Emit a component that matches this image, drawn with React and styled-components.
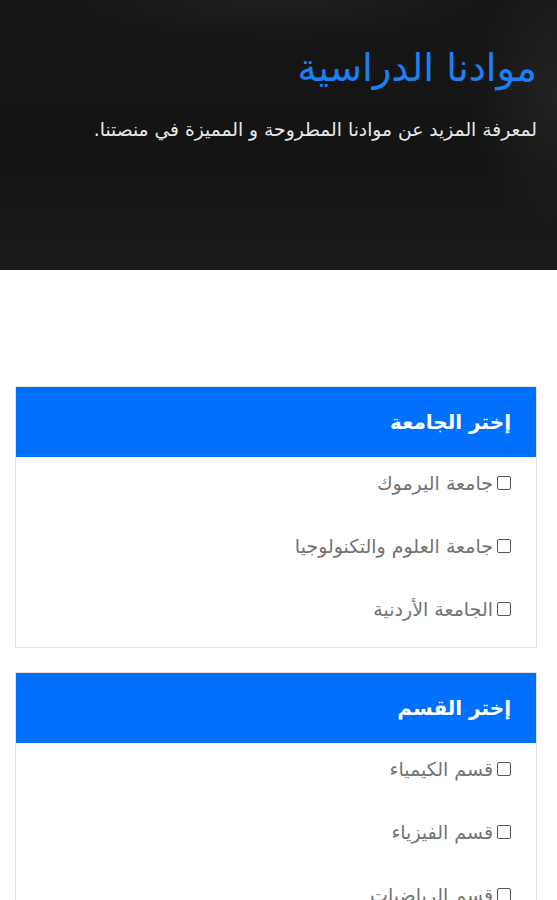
import React from "react";
import styled, { createGlobalStyle } from "styled-components";

const Global = createGlobalStyle`
  html, body { margin: 0; padding: 0; background: #fff; }
  body { font-family: "DejaVu Sans", "Noto Sans Arabic", sans-serif; }
  * { box-sizing: border-box; }
`;

const Page = styled.div`
  direction: rtl;
  width: 557px;
`;

const Hero = styled.header`
  height: 270px;
  background:
    radial-gradient(ellipse 120px 200px at 100% 35%, rgba(60,60,60,0.35), transparent 70%),
    radial-gradient(ellipse 300px 60px at 50% 0%, rgba(50,50,50,0.35), transparent 70%),
    linear-gradient(180deg, #161616 0%, #141414 60%, #1b1b1b 100%);
  padding: 44px 20px 0 20px;
  display: flex;
  flex-direction: column;
  gap: 25px;
`;

const Title = styled.h1`
  margin: 0;
  color: #1d80f2;
  font-size: 38.5px;
  font-weight: 400;
  line-height: 48px;
`;

const Subtitle = styled.p`
  margin: 0;
  color: #e8e8e8;
  font-size: 18.7px;
  line-height: 26px;
`;

const Content = styled.main`
  padding: 116px 20px 0 15px;
  display: flex;
  flex-direction: column;
  gap: 24px;
`;

const Card = styled.section`
  border: 1px solid #e3e3e3;
  background: #fff;
`;

const CardHeader = styled.h2`
  margin: 0;
  height: 70px;
  background: #0070fe;
  color: #fff;
  font-size: 20px;
  font-weight: 700;
  padding: 0 25px;
  display: flex;
  align-items: center;
`;

const List = styled.div`
  display: flex;
  flex-direction: column;
  padding: 12px 25px 24px;
  gap: 35px;
`;

const Option = styled.label`
  display: flex;
  align-items: center;
  gap: 4px;
  height: 28px;
  color: #737373;
  font-size: 19px;
`;

const Box = styled.input`
  appearance: none;
  margin: 0;
  width: 14px;
  height: 14px;
  border: 1.5px solid #555;
  border-radius: 2px;
  background: #fff;
  flex: none;
`;

const groups = [
  { title: "إختر الجامعة", items: ["جامعة اليرموك", "جامعة العلوم والتكنولوجيا", "الجامعة الأردنية"] },
  { title: "إختر القسم", items: ["قسم الكيمياء", "قسم الفيزياء", "قسم الرياضيات"] },
];

export default function App() {
  return (
    <Page>
      <Global />
      <Hero>
        <Title>موادنا الدراسية</Title>
        <Subtitle>لمعرفة المزيد عن موادنا المطروحة و المميزة في منصتنا.</Subtitle>
      </Hero>
      <Content>
        {groups.map((g) => (
          <Card key={g.title}>
            <CardHeader>{g.title}</CardHeader>
            <List>
              {g.items.map((it) => (
                <Option key={it}>
                  <Box type="checkbox" />
                  {it}
                </Option>
              ))}
            </List>
          </Card>
        ))}
      </Content>
    </Page>
  );
}
